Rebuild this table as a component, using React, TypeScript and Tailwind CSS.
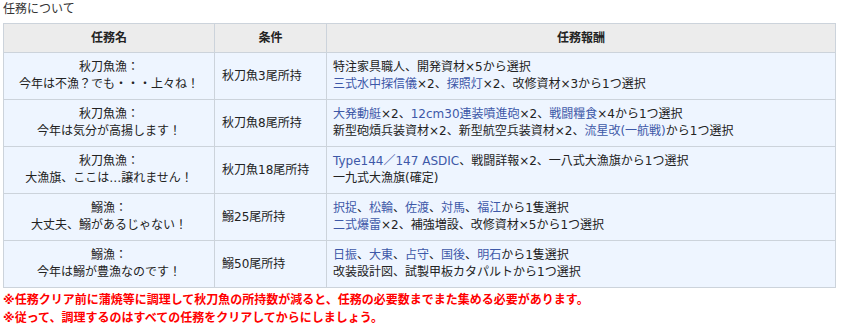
import * as React from "react";

type Part = string | { link: string };

interface Quest {
    title: string;
    subtitle: string;
    condition: string;
    rewards: Part[][];
}

const L = (link: string) => ({ link });

const quests: Quest[] = [
    {
        title: "秋刀魚漁：",
        subtitle: "今年は不漁？でも・・・上々ね！",
        condition: "秋刀魚3尾所持",
        rewards: [
            ["特注家具職人、開発資材×5から選択"],
            [L("三式水中探信儀"), "×2、", L("探照灯"), "×2、改修資材×3から1つ選択"],
        ],
    },
    {
        title: "秋刀魚漁：",
        subtitle: "今年は気分が高揚します！",
        condition: "秋刀魚8尾所持",
        rewards: [
            [L("大発動艇"), "×2、", L("12cm30連装噴進砲"), "×2、", L("戦闘糧食"), "×4から1つ選択"],
            ["新型砲熕兵装資材×2、新型航空兵装資材×2、", L("流星改(一航戦)"), "から1つ選択"],
        ],
    },
    {
        title: "秋刀魚漁：",
        subtitle: "大漁旗、ここは…譲れません！",
        condition: "秋刀魚18尾所持",
        rewards: [
            [L("Type144／147 ASDIC"), "、戦闘詳報×2、一八式大漁旗から1つ選択"],
            ["一九式大漁旗(確定)"],
        ],
    },
    {
        title: "鰯漁：",
        subtitle: "大丈夫、鰯があるじゃない！",
        condition: "鰯25尾所持",
        rewards: [
            [L("択捉"), "、", L("松輪"), "、", L("佐渡"), "、", L("対馬"), "、", L("福江"), "から1隻選択"],
            [L("二式爆雷"), "×2、補強増設、改修資材×5から1つ選択"],
        ],
    },
    {
        title: "鰯漁：",
        subtitle: "今年は鰯が豊漁なのです！",
        condition: "鰯50尾所持",
        rewards: [
            [L("日振"), "、", L("大東"), "、", L("占守"), "、", L("国後"), "、", L("明石"), "から1隻選択"],
            ["改装設計図、試製甲板カタパルトから1つ選択"],
        ],
    },
];

function Line({ parts }: { parts: Part[] }) {
    return (
        <div>
            {parts.map((p, i) =>
                typeof p === "string" ? (
                    <span key={i}>{p}</span>
                ) : (
                    <span key={i} className="text-[#3d58a8]">
                        {p.link}
                    </span>
                )
            )}
        </div>
    );
}

export default function App() {
    return (
        <div className="w-[841px] h-[327px] bg-white pl-[3px] text-[12px] text-[#222] font-['DejaVu_Sans','Noto_Sans_CJK_JP',sans-serif]">
            <div className="leading-[18px] mb-[5px] text-[#333]">任務について</div>
            <table className="w-[833px] border-collapse border border-[#ccd3db] table-fixed">
                <colgroup>
                    <col className="w-[211px]" />
                    <col className="w-[112px]" />
                    <col />
                </colgroup>
                <thead>
                    <tr className="bg-[#ececec]">
                        <th className="border border-[#ccd3db] py-[5px] leading-[18px] font-bold">任務名</th>
                        <th className="border border-[#ccd3db] py-[5px] leading-[18px] font-bold">条件</th>
                        <th className="border border-[#ccd3db] py-[5px] leading-[18px] font-bold">任務報酬</th>
                    </tr>
                </thead>
                <tbody>
                    {quests.map((q, i) => (
                        <tr key={i} className="bg-[#eef5ff]">
                            <td className="border border-[#ccd3db] py-[6px] leading-[17px] text-center align-middle">
                                <div>{q.title}</div>
                                <div>{q.subtitle}</div>
                            </td>
                            <td className="border border-[#ccd3db] py-[6px] pl-[7px] leading-[17px] align-middle">
                                {q.condition}
                            </td>
                            <td className="border border-[#ccd3db] py-[6px] pl-[6px] leading-[17px] align-middle">
                                {q.rewards.map((r, j) => (
                                    <Line key={j} parts={r} />
                                ))}
                            </td>
                        </tr>
                    ))}
                </tbody>
            </table>
            <div className="mt-[3px] leading-[18px] text-[#ff0000] font-bold">
                <div>※任務クリア前に蒲焼等に調理して秋刀魚の所持数が減ると、任務の必要数までまた集める必要があります。</div>
                <div>※従って、調理するのはすべての任務をクリアしてからにしましょう。</div>
            </div>
        </div>
    );
}
